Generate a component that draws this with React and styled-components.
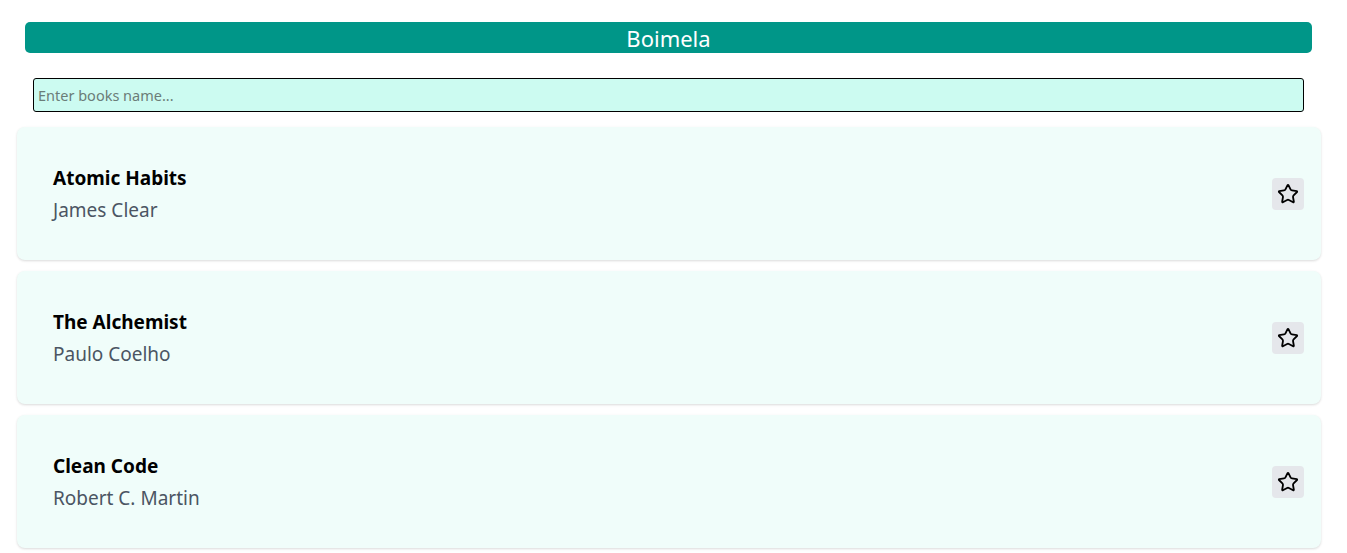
import React from "react";
import styled, { createGlobalStyle } from "styled-components";
import { Star } from "lucide-react";

const GlobalStyle = createGlobalStyle`
  body {
    margin: 0;
    background: #ffffff;
    font-family: "Noto Sans", "Open Sans", sans-serif;
  }
  * {
    box-sizing: border-box;
  }
`;

const Page = styled.main`
  padding: 22px 26px 40px 17px;
  display: flex;
  flex-direction: column;
`;

const Header = styled.h1`
  margin: 0 9px 0 8px;
  height: 31px;
  background: #009688;
  border-radius: 5px;
  color: #ffffff;
  font-size: 22px;
  font-weight: 400;
  line-height: 32px;
  text-align: center;
`;

const SearchInput = styled.input`
  margin: 25px 17px 15px 16px;
  height: 34px;
  padding: 0 4px;
  border: 1px solid #000000;
  border-radius: 3px;
  background: #ccfbf1;
  font-family: "Noto Sans", sans-serif;
  font-size: 14.5px;
  color: #111;
  outline: none;
  &::placeholder {
    color: #6b7d78;
  }
`;

const List = styled.div`
  display: flex;
  flex-direction: column;
  gap: 11px;
`;

const Card = styled.article`
  height: 133px;
  display: flex;
  align-items: center;
  justify-content: space-between;
  padding: 0 17px 0 36px;
  background: #f0fdfa;
  border-radius: 8px;
  box-shadow: 0 1px 3px rgba(0, 0, 0, 0.1), 0 1px 2px rgba(0, 0, 0, 0.05);
`;

const Info = styled.div`
  display: flex;
  flex-direction: column;
  gap: 4px;
  padding-top: 1px;
`;

const Title = styled.h2`
  margin: 0;
  font-size: 19px;
  line-height: 28px;
  font-weight: 700;
  color: #000000;
`;

const Author = styled.p`
  margin: 0;
  font-size: 19px;
  line-height: 28px;
  color: #4b5563;
`;

const StarButton = styled.button`
  width: 32px;
  height: 32px;
  display: flex;
  align-items: center;
  justify-content: center;
  padding: 0;
  border: none;
  border-radius: 4px;
  background: #e5e7eb;
  color: #000000;
  cursor: pointer;
`;

const books = [
  { title: "Atomic Habits", author: "James Clear" },
  { title: "The Alchemist", author: "Paulo Coelho" },
  { title: "Clean Code", author: "Robert C. Martin" },
];

export default function App() {
  return (
    <>
      <GlobalStyle />
      <Page>
        <Header>Boimela</Header>
        <SearchInput placeholder="Enter books name..." />
        <List>
          {books.map((b) => (
            <Card key={b.title}>
              <Info>
                <Title>{b.title}</Title>
                <Author>{b.author}</Author>
              </Info>
              <StarButton aria-label="Add to favourites">
                <Star size={22} strokeWidth={2} />
              </StarButton>
            </Card>
          ))}
        </List>
      </Page>
    </>
  );
}
